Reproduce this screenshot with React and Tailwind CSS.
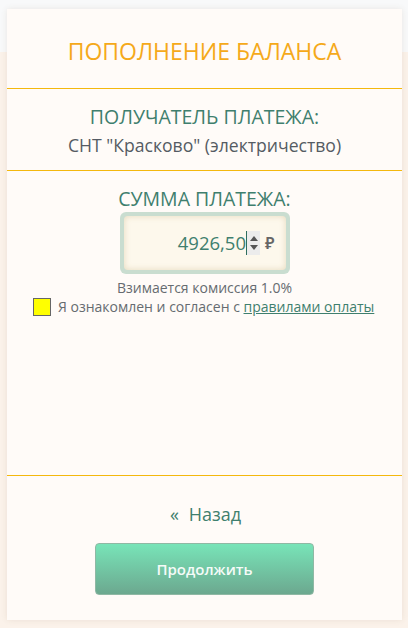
import React from "react";

export default function App() {
  const font = { fontFamily: '"Open Sans", "Noto Sans", sans-serif' };
  return (
    <div
      className="min-h-[628px] w-[408px] bg-[linear-gradient(to_bottom,#f8f9fa_52px,#fbf2ea_52px)] pt-[9px]"
      style={font}
    >
      <div className="mx-[7px] flex h-[611px] w-[395px] flex-col bg-[#fffbf8] shadow-[0_0_6px_rgba(120,90,60,0.12)]">
        <div className="flex h-[79px] items-center justify-center pt-[4px]">
          <h1 className="text-[23px] font-normal leading-[30px] text-[#f5a91a]">ПОПОЛНЕНИЕ БАЛАНСА</h1>
        </div>
        <div className="h-px bg-[#f4b80e]" />
        <div className="flex h-[81px] flex-col items-center pt-[15px]">
          <div className="text-[19.5px] leading-[26px] text-[#3f7f6e]">ПОЛУЧАТЕЛЬ ПЛАТЕЖА:</div>
          <div className="mt-[3px] text-[17.6px] leading-[24px] text-[#555b63]">СНТ "Красково" (электричество)</div>
        </div>
        <div className="h-px bg-[#f4b80e]" />
        <div className="flex flex-1 flex-col items-center pt-[15px]">
          <div className="text-[19.5px] leading-[26px] text-[#3f7f6e]">СУММА ПЛАТЕЖА:</div>
          <div className="flex h-[62px] w-[170px] items-center rounded-[6px] bg-[#c9ddd0] p-[4px]">
            <div className="flex h-full w-full items-center justify-end rounded-[4px] bg-[#fdf8ec] pr-[11px] shadow-[inset_0_0_6px_rgba(200,180,130,0.45)]">
              <span className="text-[18.5px] leading-[24px] text-[#3f7f6e]">4926,50</span>
              <span className="h-[24px] w-px bg-[#2f6f5e]" />
              <span className="flex h-[24px] w-[13px] flex-col items-center justify-center gap-[4px] bg-[#ececec]">
                <svg width="8" height="5" viewBox="0 0 8 5"><path d="M0 5 L4 0 L8 5Z" fill="#555" /></svg>
                <svg width="8" height="5" viewBox="0 0 8 5"><path d="M0 0 L4 5 L8 0Z" fill="#555" /></svg>
              </span>
              <span className="ml-[5px] text-[16px] font-semibold leading-[20px] text-[#666]">₽</span>
            </div>
          </div>
          <div className="mt-[4px] text-[14px] leading-[20px] text-[#666b70]">Взимается комиссия 1.0%</div>
          <div className="flex items-center gap-[7px] self-start pl-[26px]">
            <span className="h-[18px] w-[18px] border border-[#666] bg-[#ffff00]" />
            <span className="text-[14px] leading-[18px] text-[#666b70]">
              Я ознакомлен и согласен с{" "}
              <a className="text-[#3f7f6e] underline">правилами оплаты</a>
            </span>
          </div>
        </div>
        <div className="h-px bg-[#f4b80e]" />
        <div className="flex h-[144px] flex-col items-center pt-[25px]">
          <div className="flex items-center gap-[10px] pl-[2px] text-[18px] leading-[26px] text-[#3f7f6e]">
            <span className="text-[18px]">«</span>
            <span>Назад</span>
          </div>
          <button className="mt-[16px] h-[52px] w-[219px] rounded-[4px] border border-[#8fb8a4] bg-[linear-gradient(to_bottom,#78e4b8,#6ca88f)] text-[15px] font-semibold text-[#f5fbf8]">
            Продолжить
          </button>
        </div>
      </div>
    </div>
  );
}
